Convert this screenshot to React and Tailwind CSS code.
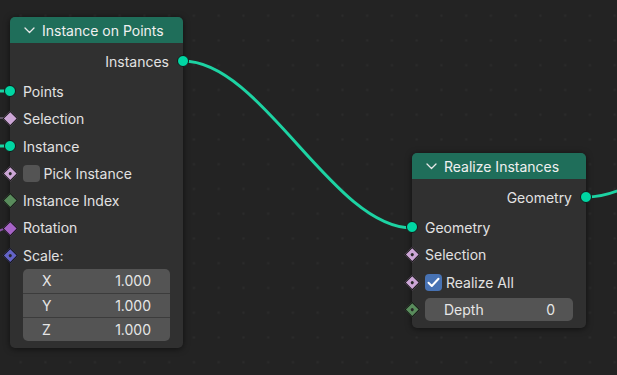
import React from "react";

const FONT = { fontFamily: "Inter, 'Noto Sans', sans-serif" };

function Socket({ kind, color, dot, side }) {
  const pos = side === "right" ? "right-[-7px]" : "left-[-7px]";
  if (kind === "circle") {
    return (
      <div className={`absolute ${pos} top-1/2 -translate-y-1/2 w-[14px] h-[14px] flex items-center justify-center`}>
        <div className="w-[12px] h-[12px] rounded-full border border-[#161616]" style={{ background: color }} />
      </div>
    );
  }
  return (
    <div className={`absolute ${pos} top-1/2 -translate-y-1/2 w-[14px] h-[14px] flex items-center justify-center`}>
      <div className="w-[10.5px] h-[10.5px] rotate-45 border border-[#161616] flex items-center justify-center" style={{ background: color }}>
        {dot && <div className="w-[3.5px] h-[3.5px] rounded-full bg-[#262626]" />}
      </div>
    </div>
  );
}

function Row({ children, socket, right }) {
  return (
    <div className={`relative h-[27.3px] flex items-center ${right ? "justify-end pr-[14px]" : "pl-[13px]"}`}>
      {socket}
      {children}
    </div>
  );
}

function Chevron() {
  return (
    <svg width="11" height="7" viewBox="0 0 11 7" className="mr-[7px]">
      <path d="M1 1 L5.5 5.5 L10 1" fill="none" stroke="#e8e8e8" strokeWidth="1.3" strokeLinecap="round" strokeLinejoin="round" />
    </svg>
  );
}

function Header({ title }) {
  return (
    <div className="h-[26px] bg-[#1f6e5a] rounded-t-[5px] flex items-center pl-[14px] text-[14px] text-[#f0f0f0]">
      <Chevron />
      <span>{title}</span>
    </div>
  );
}

function Check({ on }) {
  if (on) {
    return (
      <div className="w-[17px] h-[17px] rounded-[4px] bg-[#4772b3] flex items-center justify-center mr-[4px]">
        <svg width="13" height="11" viewBox="0 0 13 11">
          <path d="M1.5 5.8 L4.8 9 L11.5 1.8" fill="none" stroke="#ffffff" strokeWidth="2" strokeLinecap="round" strokeLinejoin="round" />
        </svg>
      </div>
    );
  }
  return <div className="w-[17px] h-[17px] rounded-[4px] bg-[#545454] mr-[4px]" />;
}

export default function App() {
  return (
    <div className="relative w-[617px] h-[375px] overflow-hidden bg-[#232323] text-[14px] text-[#e2e2e2]" style={FONT}>
      <svg className="absolute inset-0" width="617" height="375">
        <defs>
          <pattern id="dots" x="8.3" y="3.3" width="24.75" height="24.75" patternUnits="userSpaceOnUse">
            <rect x="11.4" y="11.4" width="2" height="2" fill="#2c2c2c" />
          </pattern>
        </defs>
        <rect width="617" height="375" fill="url(#dots)" />
        <path d="M183 61 C 262 61, 333 228, 412 228" fill="none" stroke="#1dd3a3" strokeWidth="3" />
        <path d="M586 197 C 650 197, 690 120, 760 120" fill="none" stroke="#1dd3a3" strokeWidth="3" />
        <path d="M-10 91 L 10 91" stroke="#1dd3a3" strokeWidth="3" />
        <path d="M-10 146 L 10 146" stroke="#1dd3a3" strokeWidth="3" />
        <path d="M-10 118 L 10 118" stroke="#5e5666" strokeWidth="2" />
        <path d="M-20 240 C -5 240, -5 228, 10 228" fill="none" stroke="#8a55a6" strokeWidth="2" />
      </svg>

      {/* Node 1: Instance on Points */}
      <div className="absolute left-[10px] top-[17px] w-[173px] rounded-[5px] bg-[#303030] shadow-[0_1px_6px_rgba(0,0,0,0.55)]">
        <Header title="Instance on Points" />
        <div className="pt-[4.5px] pb-[7px]">
          <Row right socket={<Socket kind="circle" color="#00d6a3" side="right" />}>Instances</Row>
          <div className="h-[3px]" />
          <Row socket={<Socket kind="circle" color="#00d6a3" />}>Points</Row>
          <Row socket={<Socket kind="diamond" color="#cca6d6" />}>Selection</Row>
          <Row socket={<Socket kind="circle" color="#00d6a3" />}>Instance</Row>
          <Row socket={<Socket kind="diamond" color="#cca6d6" dot />}>
            <div className="-ml-[0.5px] flex items-center">
              <Check />
              <span>Pick Instance</span>
            </div>
          </Row>
          <Row socket={<Socket kind="diamond" color="#598c5c" />}>Instance Index</Row>
          <Row socket={<Socket kind="diamond" color="#a663c7" />}>Rotation</Row>
          <Row socket={<Socket kind="diamond" color="#6363c7" dot />}>Scale:</Row>
          <div className="mx-[13px] rounded-[5px] bg-[#545454] overflow-hidden text-[#e6e6e6]">
            {["X", "Y", "Z"].map((a, i) => (
              <div key={a} className={`h-[24px] flex items-center justify-between pl-[19px] pr-[19px] ${i > 0 ? "border-t border-[#3c3c3c]" : ""}`}>
                <span>{a}</span>
                <span>1.000</span>
              </div>
            ))}
          </div>
        </div>
      </div>

      {/* Node 2: Realize Instances */}
      <div className="absolute left-[412px] top-[153px] w-[174px] rounded-[5px] bg-[#303030] shadow-[0_1px_6px_rgba(0,0,0,0.55)]">
        <Header title="Realize Instances" />
        <div className="pt-[4.5px] pb-[7px]">
          <Row right socket={<Socket kind="circle" color="#00d6a3" side="right" />}>Geometry</Row>
          <div className="h-[3px]" />
          <Row socket={<Socket kind="circle" color="#00d6a3" />}>Geometry</Row>
          <Row socket={<Socket kind="diamond" color="#cca6d6" dot />}>Selection</Row>
          <Row socket={<Socket kind="diamond" color="#cca6d6" dot />}>
            <div className="flex items-center">
              <Check on />
              <span>Realize All</span>
            </div>
          </Row>
          <div className="relative mt-[2.5px] mx-[13px] h-[23px] rounded-[5px] bg-[#545454] flex items-center justify-between pl-[19px] pr-[18px] text-[#e6e6e6]">
            <div className="absolute left-[-20px] top-1/2 -translate-y-1/2 w-[14px] h-[14px] flex items-center justify-center">
              <div className="w-[10.5px] h-[10.5px] rotate-45 border border-[#161616] bg-[#598c5c] flex items-center justify-center">
                <div className="w-[3.5px] h-[3.5px] rounded-full bg-[#262626]" />
              </div>
            </div>
            <span>Depth</span>
            <span>0</span>
          </div>
        </div>
      </div>
    </div>
  );
}
